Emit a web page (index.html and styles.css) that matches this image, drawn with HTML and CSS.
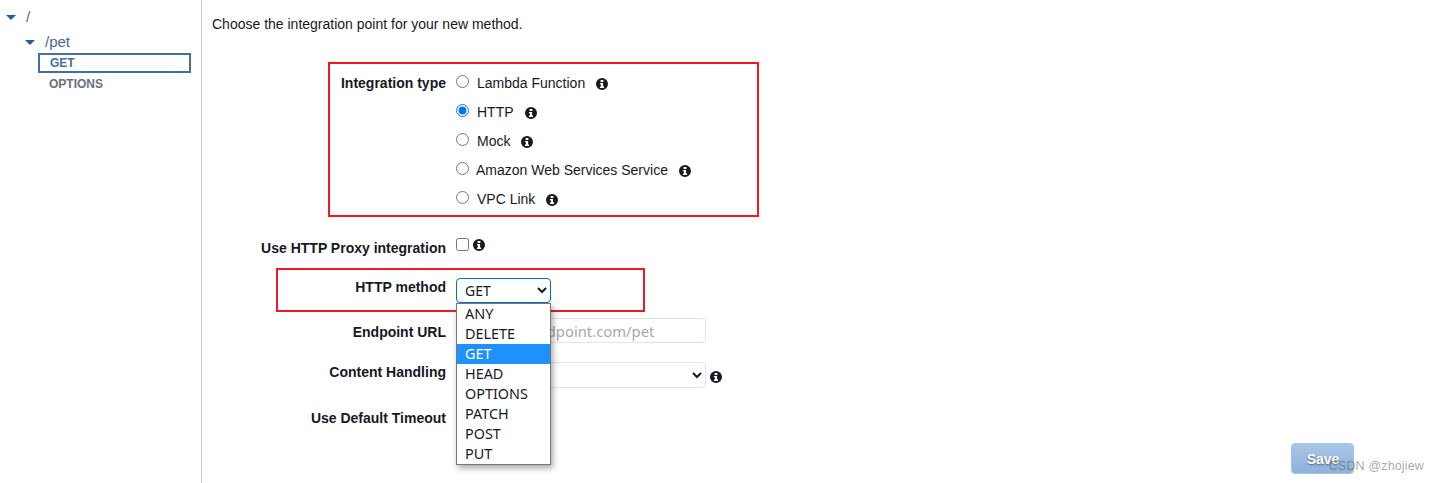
FILE: index.html
```html
<!DOCTYPE html>
<html lang="en">
<head>
<meta charset="utf-8">
<title>Integration setup</title>
<link rel="stylesheet" href="styles.css">
</head>
<body>
<svg class="defs" width="0" height="0" aria-hidden="true">
  <symbol id="info" viewBox="0 0 12 12">
    <path fill-rule="evenodd" d="M6 0a6 6 0 1 1 0 12A6 6 0 0 1 6 0ZM4.6 1.9v2.2h2.8V1.9ZM3.9 5v1.3h1v2.3h-1v1.4h4.2V8.6h-1V5Z"/>
  </symbol>
</svg>
<div class="page">
  <aside class="tree">
    <div class="node node-root"><span class="caret"></span><span class="path">/</span></div>
    <div class="node node-pet"><span class="caret"></span><span class="path">/pet</span></div>
    <div class="method method-active">GET</div>
    <div class="method method-next">OPTIONS</div>
  </aside>
  <main class="content">
    <p class="intro">Choose the integration point for your new method.</p>
    <form class="form">
      <div class="row row-type">
        <span class="label">Integration type</span>
        <div class="options">
          <label class="option"><input class="radio" type="radio" name="t"><span class="opt-text">Lambda Function</span><svg class="info"><use href="#info"/></svg></label>
          <label class="option"><input class="radio" type="radio" name="t" checked><span class="opt-text">HTTP</span><svg class="info"><use href="#info"/></svg></label>
          <label class="option"><input class="radio" type="radio" name="t"><span class="opt-text">Mock</span><svg class="info"><use href="#info"/></svg></label>
          <label class="option"><input class="radio" type="radio" name="t"><span class="opt-text opt-tight">Amazon Web Services Service</span><svg class="info"><use href="#info"/></svg></label>
          <label class="option"><input class="radio" type="radio" name="t"><span class="opt-text">VPC Link</span><svg class="info"><use href="#info"/></svg></label>
        </div>
      </div>
      <div class="row row-proxy">
        <span class="label">Use HTTP Proxy integration</span>
        <input class="check" type="checkbox"><svg class="info info-near"><use href="#info"/></svg>
      </div>
      <div class="row row-method">
        <span class="label">HTTP method</span>
        <div class="method-field">
          <select class="select select-open"><option>GET</option></select>
          <ul class="menu">
            <li>ANY</li><li>DELETE</li><li class="selected">GET</li><li>HEAD</li><li>OPTIONS</li><li>PATCH</li><li>POST</li><li>PUT</li>
          </ul>
        </div>
      </div>
      <div class="row row-url">
        <span class="label">Endpoint URL</span>
        <input class="input" type="text" placeholder="https://a.endpoint.com/pet">
      </div>
      <div class="row row-handling">
        <span class="label">Content Handling</span>
        <select class="select select-wide"><option>Passthrough</option></select>
        <svg class="info info-side"><use href="#info"/></svg>
      </div>
      <div class="row row-timeout">
        <span class="label">Use Default Timeout</span>
      </div>
      <div class="actions"><button class="save" type="button">Save</button></div>
    </form>
    <div class="mark mark-type"></div>
    <div class="mark mark-method"></div>
  </main>
</div>
<div class="watermark">CSDN @zhojiew</div>
</body>
</html>
```
FILE: styles.css
```css
* { box-sizing: border-box; }
html, body { margin: 0; height: 483px; overflow: hidden; background: #fff; }
body { font: 14px/20px "Liberation Sans", Arial, sans-serif; color: #16191f; position: relative; }
.defs { position: absolute; }
.page { display: flex; height: 483px; }

.tree { width: 202px; flex: none; border-right: 1px solid #c9cbcd; padding-top: 7px; color: #545b64; }
.node { display: flex; align-items: center; height: 20px; color: #44698f; }
.node-root { padding-left: 6px; }
.node-pet { padding-left: 25px; margin-top: 5px; }
.caret { width: 0; height: 0; border: 5px solid transparent; border-top: 5px solid #1f5fa8; border-bottom: 0; margin-right: 10px; }
.path { font-size: 15px; }
.method { margin-left: 38px; width: 153px; height: 20px; padding-left: 11px; font-size: 12px; font-weight: 700; line-height: 20px; color: #687078; }
.method-active { border: 2px solid #44709f; color: #44709f; line-height: 16px; padding-left: 10px; height: 20px; margin-top: 1px; }
.method-next { margin-top: 1px; }

.content { flex: 1; position: relative; padding-left: 10px; }
.intro { margin: 14px 0 0; height: 20px; }
.form { display: flex; flex-direction: column; height: 449px; }
.row { display: flex; align-items: flex-start; }
.label { width: 234px; flex: none; margin-right: 10px; text-align: right; font-weight: 700; color: #16191f; }
.row-type { margin-top: 39px; }
.options { display: flex; flex-direction: column; }
.option { display: flex; align-items: center; height: 29px; margin-top: -5px; margin-bottom: 5px; }
.radio { width: 13px; height: 13px; margin: -2px 8px 0 0; accent-color: #0075ff; flex: none; }
.opt-text { margin-right: 11px; }
.opt-tight { margin-left: -1px; }
.info { width: 12px; height: 12px; fill: #16191f; flex: none; }
.option .info { margin-top: 2px; }

.row-proxy { margin-top: 20px; }
.check { width: 13px; height: 13px; margin: 0 4px 0 0; flex: none; }
.info-near { margin-top: 1px; }
.row-method { margin-top: 20px; }
.row-method .label { margin-top: -1px; }
.method-field { position: relative; }
.select { font: 14px "Noto Sans", "Open Sans", sans-serif; height: 25px; background: #fff; color: #16191f; padding-left: 4px; border-radius: 4px; }
.select-open { width: 95px; border: 1px solid #0073bb; display: block; }
.menu { position: absolute; z-index: 2; left: 0; top: 25px; width: 95px; height: 162px; margin: 0; padding: 0; list-style: none; background: #fff; border: 1px solid #767676; box-shadow: 2px 3px 6px rgba(0,0,0,.35); font: 14.4px/19px "Noto Sans", "Open Sans", sans-serif; }
.menu li { height: 20px; padding-left: 8px; }
.menu .selected { background: #1e90ff; color: #fff; }

.row-url { margin-top: 15px; height: 25px; align-items: center; }
.row-url .label { margin-top: 2px; }
.input { width: 250px; height: 25px; padding: 0 9px; border: 1px solid #e1e4e6; border-radius: 3px; font: 14.8px "Noto Sans", sans-serif; }
.input::placeholder { color: #a5a9ad; }
.row-handling { margin-top: 19px; height: 26px; }
.select-wide { width: 250px; height: 26px; border: 1px solid #e1e4e6; }
.info-side { margin: 9px 0 0 4px; }
.row-timeout { margin-top: 20px; }
.actions { margin-top: auto; padding: 0 80px 9px 0; display: flex; justify-content: flex-end; }
.save { width: 63px; height: 31px; border: 1px solid #a6c2e3; border-radius: 4px; background: linear-gradient(#a9c6e8, #8db2dc); color: #fff; font: 700 14px "Liberation Sans", sans-serif; text-shadow: 0 1px 2px rgba(0,0,0,.5); padding: 0 0 0 1px; }

.mark { position: absolute; border: 2px solid #ed1c24; pointer-events: none; }
.mark-type { left: 126px; top: 62px; width: 431px; height: 155px; }
.mark-method { left: 74px; top: 268px; width: 369px; height: 44px; z-index: 1; }

.watermark { position: absolute; right: 10px; top: 459px; font-size: 12.5px; line-height: 14px; color: rgba(80,80,80,.5); letter-spacing: .15px; }
```
